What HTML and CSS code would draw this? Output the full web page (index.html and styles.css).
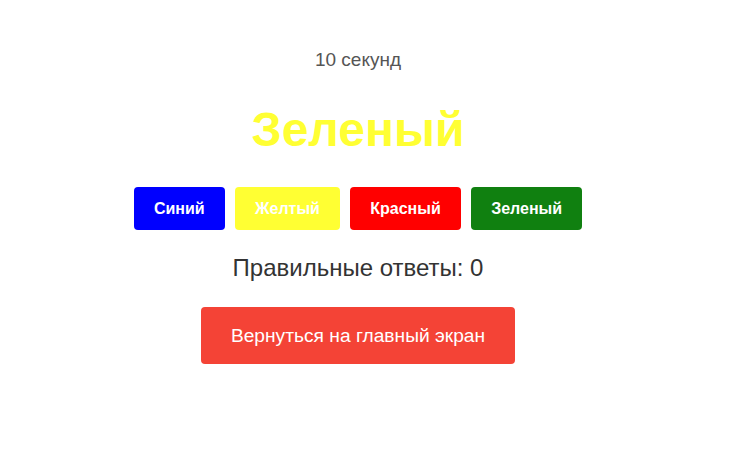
FILE: index.html
```html
<!DOCTYPE html>
<html lang="ru">
<head>
<meta charset="utf-8">
<title>Игра цветов</title>
<link rel="stylesheet" href="styles.css">
</head>
<body>
<main class="game">
  <p class="timer">10 секунд</p>
  <h1 class="word">Зеленый</h1>
  <div class="options">
    <button class="opt opt-blue">Синий</button>
    <button class="opt opt-yellow">Желтый</button>
    <button class="opt opt-red">Красный</button>
    <button class="opt opt-green">Зеленый</button>
  </div>
  <p class="score">Правильные ответы: 0</p>
  <button class="home">Вернуться на главный экран</button>
</main>
</body>
</html>
```
FILE: styles.css
```css
html, body {
  margin: 0;
  padding: 0;
  background: #fff;
}
body {
  font-family: "Liberation Sans", Arial, sans-serif;
}
.game {
  width: 716px;
  display: flex;
  flex-direction: column;
  align-items: center;
  text-align: center;
}
.timer {
  margin: 49px 0 0;
  font-size: 19px;
  line-height: 22px;
  color: #555;
}
.word {
  margin: 31px 0 0;
  font-size: 48px;
  line-height: 56px;
  font-weight: bold;
  color: #ffff33;
}
.options {
  margin-top: 29px;
  display: flex;
  gap: 10.4px;
}
.opt {
  border: none;
  border-radius: 4px;
  padding: 12px 20px;
  font-family: inherit;
  font-size: 16px;
  line-height: 19px;
  font-weight: bold;
  color: #fff;
}
.opt-blue { background: #0000ff; }
.opt-yellow { background: #ffff33; }
.opt-red { background: #ff0000; }
.opt-green { background: #108010; }
.score {
  margin: 24px 0 0;
  font-size: 24px;
  line-height: 28px;
  color: #333;
}
.home {
  margin-top: 25px;
  border: none;
  border-radius: 4px;
  padding: 17.5px 30px;
  background: #f44336;
  color: #fff;
  font-family: inherit;
  font-size: 19.2px;
  line-height: 22px;
}
```
